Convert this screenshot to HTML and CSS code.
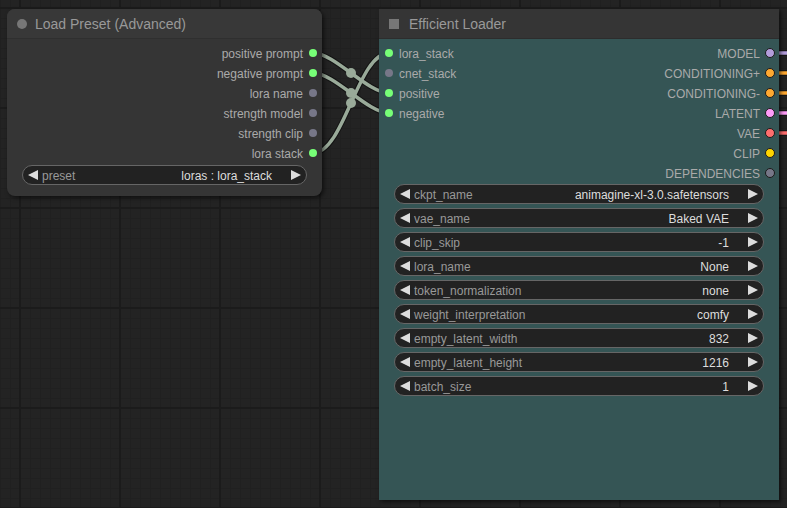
FILE: index.html
```html
<!DOCTYPE html>
<html lang="en">
<head>
    <meta charset="UTF-8">
    <meta name="viewport" content="width=device-width, initial-scale=1.0">
    <title>Efficient Loader</title>
    <link rel="stylesheet" href="styles.css">
</head>
<body>
    <div class="canvas">
        <!-- links are drawn below the nodes -->
        <svg class="links" width="787" height="508" viewBox="0 0 787 508">
            <g class="link-shadow">
                <path d="M313,53 C334.5,53 367.5,93 389,93"/>
                <path d="M313,73 C334.5,73 367.5,113 389,113"/>
                <path d="M313,153 C344.4,153 357.6,53 389,53"/>
                <path d="M770,53 H787"/>
                <path d="M770,73 H787"/>
                <path d="M770,93 H787"/>
                <path d="M770,113 H787"/>
                <path d="M770,133 H787"/>
            </g>
            <g class="link">
                <path d="M313,53 C334.5,53 367.5,93 389,93"/>
                <path d="M313,73 C334.5,73 367.5,113 389,113"/>
                <path d="M313,153 C344.4,153 357.6,53 389,53"/>
                <path class="l-model" d="M770,53 H787"/>
                <path class="l-cond" d="M770,73 H787"/>
                <path class="l-cond" d="M770,93 H787"/>
                <path class="l-latent" d="M770,113 H787"/>
                <path class="l-vae" d="M770,133 H787"/>
            </g>
            <g class="link-mid">
                <circle cx="351" cy="73" r="5"/>
                <circle cx="351" cy="93" r="5"/>
                <circle cx="351" cy="103" r="5"/>
            </g>
        </svg>

        <div class="node preset-node">
            <div class="node-title">
                <span class="title-dot"></span>
                <span class="title-text">Load Preset (Advanced)</span>
            </div>
            <div class="node-body">
                <div class="slots">
                    <div class="slot-col outputs">
                        <div class="slot"><span>positive prompt</span><i class="dot green"></i></div>
                        <div class="slot"><span>negative prompt</span><i class="dot green"></i></div>
                        <div class="slot"><span>lora name</span><i class="dot grey"></i></div>
                        <div class="slot"><span>strength model</span><i class="dot grey"></i></div>
                        <div class="slot"><span>strength clip</span><i class="dot grey"></i></div>
                        <div class="slot"><span>lora stack</span><i class="dot green"></i></div>
                    </div>
                </div>
                <div class="widgets preset-widgets">
                    <div class="widget"><span class="arrow left"></span><span class="w-label">preset</span><span class="w-value">loras : lora_stack</span><span class="arrow right"></span></div>
                </div>
            </div>
        </div>

        <div class="node loader-node">
            <div class="node-title">
                <span class="title-box"></span>
                <span class="title-text">Efficient Loader</span>
            </div>
            <div class="node-body">
                <div class="slots">
                    <div class="slot-col inputs">
                        <div class="slot"><i class="dot green"></i><span>lora_stack</span></div>
                        <div class="slot"><i class="dot grey"></i><span>cnet_stack</span></div>
                        <div class="slot"><i class="dot green"></i><span>positive</span></div>
                        <div class="slot"><i class="dot green"></i><span>negative</span></div>
                    </div>
                    <div class="slot-col outputs">
                        <div class="slot"><span>MODEL</span><i class="dot ring model"></i></div>
                        <div class="slot"><span>CONDITIONING+</span><i class="dot ring cond"></i></div>
                        <div class="slot"><span>CONDITIONING-</span><i class="dot ring cond"></i></div>
                        <div class="slot"><span>LATENT</span><i class="dot ring latent"></i></div>
                        <div class="slot"><span>VAE</span><i class="dot ring vae"></i></div>
                        <div class="slot"><span>CLIP</span><i class="dot ring clip"></i></div>
                        <div class="slot"><span>DEPENDENCIES</span><i class="dot ring grey"></i></div>
                    </div>
                </div>
                <div class="widgets loader-widgets">
                    <div class="widget"><span class="arrow left"></span><span class="w-label">ckpt_name</span><span class="w-value">animagine-xl-3.0.safetensors</span><span class="arrow right"></span></div>
                    <div class="widget"><span class="arrow left"></span><span class="w-label">vae_name</span><span class="w-value">Baked VAE</span><span class="arrow right"></span></div>
                    <div class="widget"><span class="arrow left"></span><span class="w-label">clip_skip</span><span class="w-value">-1</span><span class="arrow right"></span></div>
                    <div class="widget"><span class="arrow left"></span><span class="w-label">lora_name</span><span class="w-value">None</span><span class="arrow right"></span></div>
                    <div class="widget"><span class="arrow left"></span><span class="w-label">token_normalization</span><span class="w-value">none</span><span class="arrow right"></span></div>
                    <div class="widget"><span class="arrow left"></span><span class="w-label">weight_interpretation</span><span class="w-value">comfy</span><span class="arrow right"></span></div>
                    <div class="widget"><span class="arrow left"></span><span class="w-label">empty_latent_width</span><span class="w-value">832</span><span class="arrow right"></span></div>
                    <div class="widget"><span class="arrow left"></span><span class="w-label">empty_latent_height</span><span class="w-value">1216</span><span class="arrow right"></span></div>
                    <div class="widget"><span class="arrow left"></span><span class="w-label">batch_size</span><span class="w-value">1</span><span class="arrow right"></span></div>
                </div>
            </div>
        </div>
    </div>
</body>
</html>
```

FILE: styles.css
```css
body {
    margin: 0;
    font-family: "Liberation Sans", Arial, sans-serif;
    background: #222;
}
.canvas {
    position: relative;
    width: 787px;
    height: 508px;
    overflow: hidden;
    background-color: #232323;
    background-image:
        linear-gradient(90deg, #1b1b1b 2px, transparent 2px),
        linear-gradient(180deg, #1b1b1b 2px, transparent 2px),
        linear-gradient(90deg, #202020 1px, transparent 1px),
        linear-gradient(180deg, #202020 1px, transparent 1px);
    background-size: 100px 100px, 100px 100px, 10px 10px, 10px 10px;
    background-position: 19px 0, 0 7px, 0 0, 0 8px;
}

/* links */
.links { position: absolute; left: 0; top: 0; z-index: 0; }
.links path { fill: none; }
.link-shadow path { stroke: rgba(0, 0, 0, 0.45); stroke-width: 5.5; }
.link path { stroke: #9a9; stroke-width: 3.5; }
.link .l-model { stroke: #b39ddb; }
.link .l-cond { stroke: #ffa931; }
.link .l-latent { stroke: #ff9cf9; }
.link .l-vae { stroke: #ff6e6e; }
.link-mid circle { fill: #9a9; }

/* nodes */
.node {
    position: absolute;
    z-index: 1;
    box-sizing: border-box;
    display: flex;
    flex-direction: column;
    box-shadow: 2px 2px 4px rgba(0, 0, 0, 0.55);
}
.preset-node {
    left: 7px;
    top: 9px;
    width: 315px;
    height: 187px;
    border-radius: 8px;
    background: #353535;
}
.loader-node {
    left: 379px;
    top: 9px;
    width: 400px;
    height: 491px;
    background: #355555;
}
.node-title {
    height: 30px;
    flex: none;
    display: flex;
    align-items: center;
    background: #383838;
    border-bottom: 1px solid rgba(0, 0, 0, 0.15);
    box-sizing: border-box;
    color: #999;
    font-size: 14px;
    line-height: 30px;
}
.preset-node .node-title { border-radius: 8px 8px 0 0; }
.loader-node .node-title { background: #353535; }
.title-dot {
    width: 10px;
    height: 10px;
    border-radius: 50%;
    background: #777;
    margin: 0 8px 0 10px;
}
.title-box {
    width: 10px;
    height: 10px;
    background: #777;
    margin: 0 10px 0 10px;
}
.title-text { padding-top: 1px; }

.node-body { flex: 1; display: flex; flex-direction: column; }
.slots { display: flex; justify-content: space-between; padding-top: 4px; }
.slot-col { display: flex; flex-direction: column; }
.slot-col.inputs { padding-left: 6px; }
.slot-col.outputs { padding-right: 5px; margin-left: auto; align-items: flex-end; }
.slot {
    height: 20px;
    display: flex;
    align-items: center;
    gap: 6px;
    color: #aaa;
    font-size: 12px;
    line-height: 20px;
}
.slot span { padding-top: 1px; }
.dot {
    width: 8px;
    height: 8px;
    border-radius: 50%;
    box-sizing: border-box;
    flex: none;
}
.dot.ring {
    width: 10px;
    height: 10px;
    border: 1px solid #1a1a1a;
    margin-right: -1px;
}
.outputs .slot:has(.ring) { gap: 5px; }
.green { background: #7f7; }
.grey { background: #778; }
.model { background: #b39ddb; }
.cond { background: #ffa931; }
.latent { background: #ff9cf9; }
.vae { background: #ff6e6e; }
.clip { background: #ffd500; }

/* combo widgets */
.widgets { display: flex; flex-direction: column; gap: 4px; margin: 0 15px; }
.preset-widgets { margin-top: 2px; }
.loader-widgets { margin-top: 1px; }
.widget {
    height: 20px;
    box-sizing: border-box;
    border: 1px solid #666;
    border-radius: 10px;
    background: #222;
    display: flex;
    align-items: center;
    padding: 0 5px;
    font-size: 12px;
    line-height: 18px;
}
.arrow { width: 0; height: 0; border-top: 5px solid transparent; border-bottom: 5px solid transparent; flex: none; }
.arrow.left { border-right: 10px solid #ddd; margin-right: 4px; }
.arrow.right { border-left: 10px solid #ddd; margin-left: 19px; }
.w-label { color: #999; flex: 1; padding-top: 1px; }
.w-value { color: #ddd; padding-top: 1px; }
```
